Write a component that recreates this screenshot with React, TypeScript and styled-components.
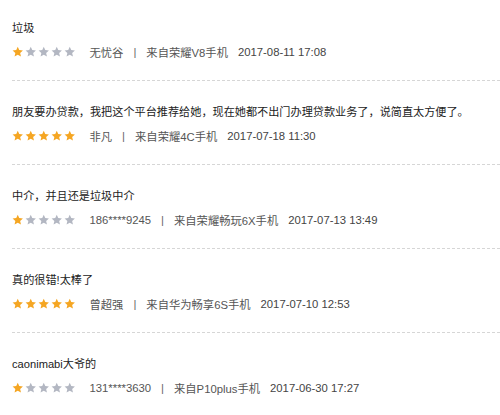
import React from "react";
import styled, { createGlobalStyle } from "styled-components";

const Global = createGlobalStyle`
  html, body { margin: 0; padding: 0; background: #fff; }
  body { font-family: "Liberation Sans", "Noto Sans CJK SC", sans-serif; }
`;

const List = styled.ul`
  list-style: none;
  margin: 0;
  padding: 0 0 0 12px;
`;

const Item = styled.li`
  padding: 21px 0 18px;
  border-bottom: 1px dashed #d6d6d6;
  &:first-child { padding-top: 18px; }
  &:last-child { border-bottom: none; }
`;

const Comment = styled.div`
  font-family: "Liberation Sans", "Noto Sans CJK SC", sans-serif;
  font-size: 11.15px;
  line-height: 20px;
  height: 20px;
  color: #222;
  white-space: nowrap;
`;

const Meta = styled.div`
  margin-top: 4px;
  height: 20px;
  display: flex;
  align-items: center;
  font-size: 11.3px;
  color: #555;
  white-space: nowrap;
`;

const Stars = styled.span`
  display: inline-flex;
  gap: 1.5px;
  margin-right: 14px;
`;

const Sep = styled.span`
  margin: 0 10px;
  color: #666;
`;

const DateText = styled.span`
  margin-left: 10px;
  color: #444;
`;

const Star: React.FC<{ on: boolean }> = ({ on }) => (
  <svg width="11.5" height="11.5" viewBox="0 0 24 24">
    <polygon
      points="12,1.5 15.1,8.6 22.8,9.3 17,14.4 18.7,22 12,18 5.3,22 7,14.4 1.2,9.3 8.9,8.6"
      fill={on ? "#f5a623" : "#b3b7c2"}
    />
  </svg>
);

type Review = { text: string; stars: number; user: string; device: string; date: string };

const reviews: Review[] = [
  { text: "垃圾", stars: 1, user: "无忧谷", device: "来自荣耀V8手机", date: "2017-08-11 17:08" },
  {
    text: "朋友要办贷款，我把这个平台推荐给她，现在她都不出门办理贷款业务了，说简直太方便了。",
    stars: 5,
    user: "非凡",
    device: "来自荣耀4C手机",
    date: "2017-07-18 11:30",
  },
  { text: "中介，并且还是垃圾中介", stars: 1, user: "186****9245", device: "来自荣耀畅玩6X手机", date: "2017-07-13 13:49" },
  { text: "真的很错!太棒了", stars: 5, user: "曾超强", device: "来自华为畅享6S手机", date: "2017-07-10 12:53" },
  { text: "caonimabi大爷的", stars: 1, user: "131****3630", device: "来自P10plus手机", date: "2017-06-30 17:27" },
];

export default function App() {
  return (
    <>
      <Global />
      <List>
        {reviews.map((r, i) => (
          <Item key={i}>
            <Comment>{r.text}</Comment>
            <Meta>
              <Stars>
                {[0, 1, 2, 3, 4].map((k) => (
                  <Star key={k} on={k < r.stars} />
                ))}
              </Stars>
              <span>{r.user}</span>
              <Sep>|</Sep>
              <span>{r.device}</span>
              <DateText>{r.date}</DateText>
            </Meta>
          </Item>
        ))}
      </List>
    </>
  );
}
